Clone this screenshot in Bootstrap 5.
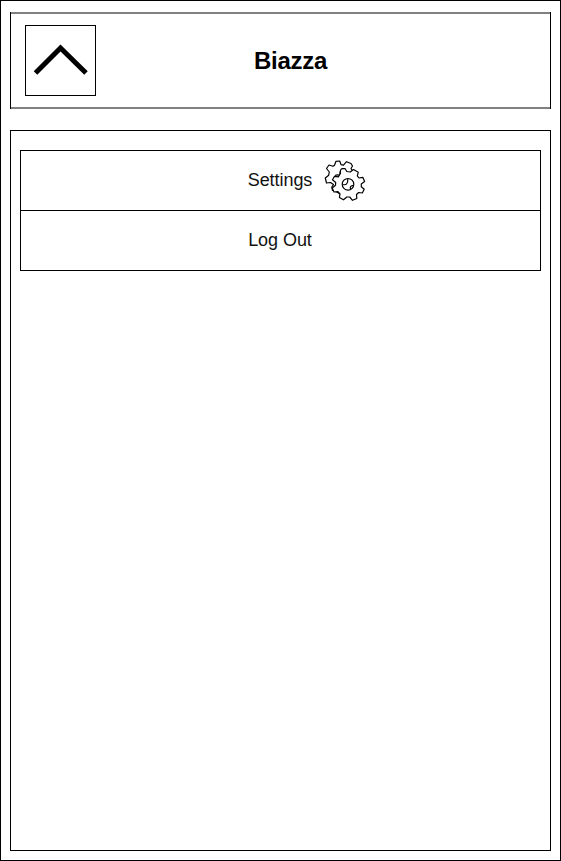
<!DOCTYPE html>
<html lang="en">
<head>
<meta charset="utf-8">
<meta name="viewport" content="width=device-width, initial-scale=1">
<title>Biazza</title>
<link href="https://cdn.jsdelivr.net/npm/bootstrap@5.3.0/dist/css/bootstrap.min.css" rel="stylesheet">
<style>
body{font-family:"Liberation Sans",Arial,sans-serif;color:#000}
.screen{height:861px;padding:11px 9px 9px;border:1px solid #000}
.topbar{height:97px;border:1px solid #000;border-width:0 1px;padding-left:14px;background:linear-gradient(#808080,#808080) top/100% 2px no-repeat,linear-gradient(#808080,#808080) bottom/100% 2px no-repeat}
.back{width:71px;height:71px;border:1px solid #000}
.brand{font-size:24px;line-height:28px;margin-right:65px;letter-spacing:-.3px}
.panel{margin-top:21px;border:1px solid #000;padding:19px 9px}
.menu{border:1px solid #000}
.entry{height:59px;font-size:18px;color:#111;padding-bottom:1px}
.entry:hover{color:#111}
.entry + .entry{height:60px;border-top:1px solid #000;padding-bottom:2px}
.entry-label{line-height:20px;letter-spacing:-.06px;margin-right:1px}
.gear{left:calc(100% + 12px);top:-10px}
</style>
<script src="https://cdn.jsdelivr.net/npm/bootstrap@5.3.0/dist/js/bootstrap.bundle.min.js"></script>
</head>
<body class="bg-white m-0">
<div class="screen d-flex flex-column">
  <header class="topbar d-flex align-items-center flex-shrink-0">
    <button type="button" class="back btn p-0 rounded-0 bg-white d-block flex-shrink-0" aria-label="Back">
      <svg class="d-block" width="69" height="69" viewBox="26 26 69 69" fill="none" stroke="#000" stroke-width="5"><path d="M35.500 73 60.500 48 86 73"/></svg>
    </button>
    <h1 class="brand fw-bold mb-0 flex-grow-1 text-center">Biazza</h1>
  </header>
  <main class="panel flex-grow-1">
    <nav class="menu">
      <a href="#" class="entry d-flex align-items-center justify-content-center text-decoration-none">
        <span class="entry-label position-relative">Settings
          <svg class="gear position-absolute" width="42" height="42" viewBox="324 160 42 42" fill="#fff" stroke="#000" stroke-width="1.2" stroke-linejoin="round">
            <path d="M334.500 165.200 336 161.300 339.700 161 341 164.600 343.500 165.200 346.500 161.700 351 163.500 352.500 166 351 168.500 357 178 340 194 335.500 191 332.500 190.500 331.800 187 333.500 184.500 330.500 182.500 326.500 183 325.300 178 328.700 175.200 329.300 172 326.500 168.500 329 165 333 166.300Z"/>
            <path d="M335 175.500Q337 174.500 339 175.200 341 173.500 339.800 171.500" fill="none"/>
            <path d="M340.500 173.200Q339.800 169 342.500 168.600L345 168.500 346.800 171.500 350.200 172 353.500 169.500 358.300 172.200 357.300 175.800 359 178 362.800 177.300 364.600 181.500 361.300 184 361.300 186.700 364.200 189.200 362.300 193 358.700 192.500 356.500 194.500 356.800 198.500 352.500 200.300 349.700 197 346.800 197 343.500 199.800 339.400 197.500 340 194 338 191.700 334 192 332.200 188 335.500 185.200 335.700 182.500 332.500 179.800 334.500 176.300 338.500 176.800Z"/>
            <circle cx="348" cy="184.300" r="5.800"/>
            <path d="M342.800 184.500Q348 186 347.800 179M350.500 189.300Q349.500 185.500 353.500 185.300" fill="none"/>
          </svg>
        </span>
      </a>
      <a href="#" class="entry d-flex align-items-center justify-content-center text-decoration-none"><span class="entry-label">Log Out</span></a>
    </nav>
  </main>
</div>
</body>
</html>
